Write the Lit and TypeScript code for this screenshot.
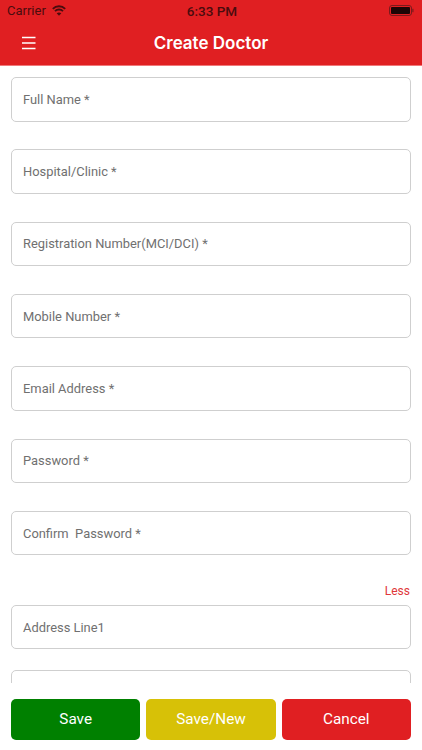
import { LitElement, html, css } from "lit";
import { customElement } from "lit/decorators.js";

const fields = [
  "Full Name *",
  "Hospital/Clinic *",
  "Registration Number(MCI/DCI) *",
  "Mobile Number *",
  "Email Address *",
  "Password *",
  "Confirm\u00a0 Password *",
];

@customElement("app-root")
export class AppRoot extends LitElement {
  static styles = css`
    :host {
      display: flex;
      flex-direction: column;
      width: 422px;
      height: 750px;
      overflow: hidden;
      background: #fff;
      font-family: Roboto, "Liberation Sans", sans-serif;
    }
    .head {
      background: #e01f22;
      height: 65px;
      flex: none;
      border-bottom: 1px solid #f0787a;
      box-sizing: content-box;
      display: flex;
      flex-direction: column;
    }
    .status {
      height: 21px;
      display: grid;
      grid-template-columns: 1fr auto 1fr;
      align-items: center;
      color: #4a0c0e;
      font-size: 13px;
      padding: 0 8px 0 7px;
    }
    .status .left {
      display: flex;
      align-items: center;
      gap: 6px;
    }
    .status .time {
      font-weight: 500;
      font-size: 13.5px;
      margin-left: 3px;
    }
    .status .right {
      justify-self: end;
      display: flex;
    }
    .nav {
      flex: 1;
      display: grid;
      grid-template-columns: 1fr auto 1fr;
      align-items: center;
      padding: 0 22px;
      color: #fff;
    }
    .nav .title {
      font-family: Inter, "Liberation Sans", sans-serif;
      font-size: 17px;
      font-weight: 600;
    }
    .nav svg {
      display: block;
    }
    .form {
      flex: 1;
      min-height: 0;
      overflow: hidden;
      padding: 11px 11px 0;
      display: flex;
      flex-direction: column;
    }
    .field {
      flex: none;
      height: 44.5px;
      border: 1px solid #cfcfcf;
      border-radius: 5px;
      box-sizing: border-box;
      margin-bottom: 27.83px;
      padding: 0 11px;
      display: flex;
      align-items: center;
      font-size: 12.9px;
      color: #707070;
    }
    .field.tail {
      margin-bottom: 20.5px;
    }
    .less {
      flex: none;
      align-self: flex-end;
      color: #e0383a;
      font-size: 12px;
      line-height: 15px;
      margin: 1px 1px 5.5px 0;
    }
    .actions {
      flex: none;
      height: 67px;
      box-sizing: border-box;
      padding: 16px 11px 10.5px;
      display: grid;
      grid-template-columns: repeat(3, 1fr);
      gap: 6px;
      background: #fff;
    }
    .btn {
      border-radius: 5px;
      color: #fff;
      display: flex;
      align-items: center;
      justify-content: center;
      font-size: 15.3px;
    }
    .save { background: #008000; }
    .new { background: #d7c107; }
    .cancel { background: #e01f22; }
  `;

  render() {
    return html`
      <div class="head">
        <div class="status">
          <div class="left">
            <span>Carrier</span>
            <svg width="14" height="11" viewBox="0 0 14 11" fill="none" stroke="#4a0c0e" stroke-width="1.9">
              <path d="M0.8 3.8C4.2 0.4 9.8 0.4 13.2 3.8" />
              <path d="M3 6.1C5.2 4 8.8 4 11 6.1" />
              <path d="M7 10.8 4.7 8.3C6 7.2 8 7.2 9.3 8.3Z" fill="#4a0c0e" stroke="none" />
            </svg>
          </div>
          <span class="time">6:33 PM</span>
          <div class="right">
            <svg width="25" height="11" viewBox="0 0 25 11">
              <rect x="0.5" y="0.5" width="22" height="10" rx="2.5" fill="none" stroke="#7a1a1c" />
              <rect x="2" y="2" width="19" height="7" rx="1" fill="#1d0506" />
              <rect x="23.3" y="3.8" width="1.2" height="3.4" fill="#7a1a1c" />
            </svg>
          </div>
        </div>
        <div class="nav">
          <svg width="14" height="14" viewBox="0 0 14 14" stroke="#fff" stroke-width="1.4">
            <path d="M0 1.5H13.5M0 7H13.5M0 12.5H13.5" />
          </svg>
          <span class="title">Create Doctor</span>
          <span></span>
        </div>
      </div>
      <div class="form">
        ${fields.map((f) => html`<div class="field">${f}</div>`)}
        <div class="less">Less</div>
        <div class="field tail">Address Line1</div>
        <div class="field"></div>
      </div>
      <div class="actions">
        <div class="btn save">Save</div>
        <div class="btn new">Save/New</div>
        <div class="btn cancel">Cancel</div>
      </div>
    `;
  }
}
